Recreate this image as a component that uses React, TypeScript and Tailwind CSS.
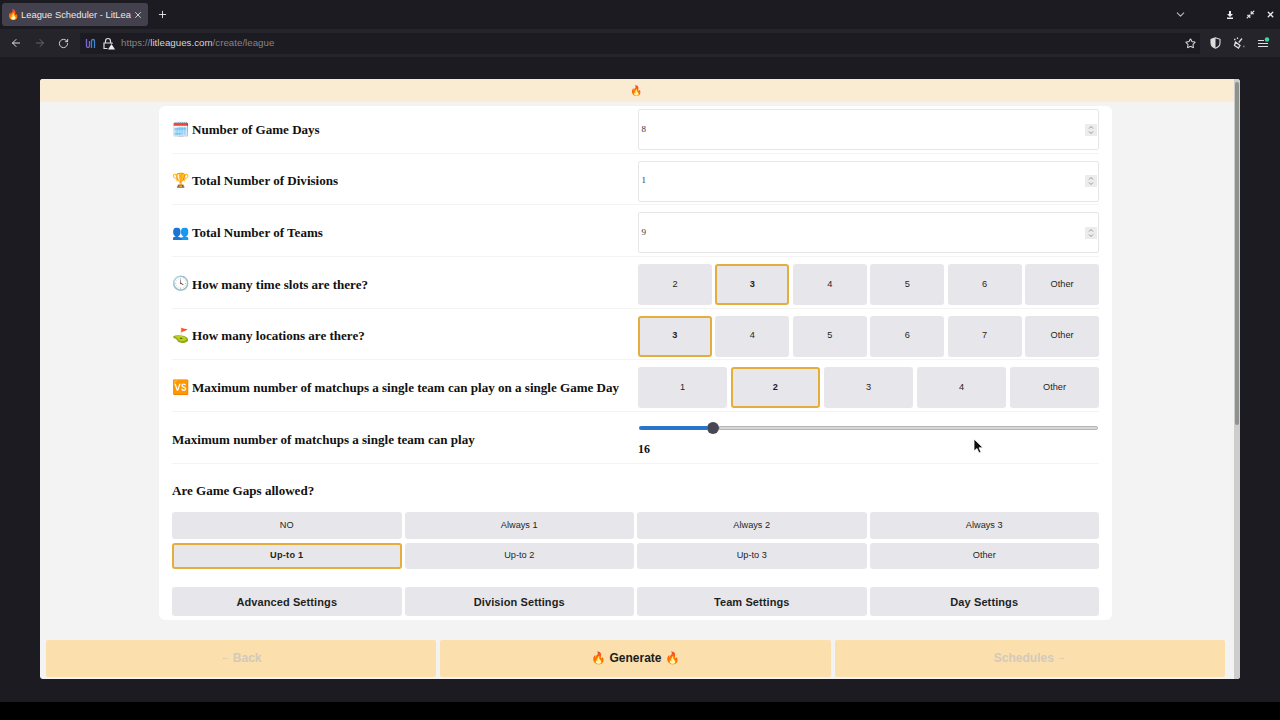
import { ArrowLeft, ArrowRight, RotateCw, Plus, X, ChevronDown, Star, Minimize2 } from 'lucide-react';

const sans = "font-['Liberation_Sans',sans-serif]";

function Choice({ label, active, big }: { label: string; active?: boolean; big?: boolean }) {
  return (
    <div
      className={`flex min-w-0 flex-1 basis-0 items-center justify-center rounded-[3px] border-2 bg-[#e7e7eb] text-[#1f1f23] ${
        big ? 'text-[11px] font-bold tracking-[0.1px]' : 'text-[9.2px]'
      } ${active ? 'border-[#e5ad3c] font-bold tracking-[0.25px]' : 'border-transparent'}`}
    >
      {label}
    </div>
  );
}

function ChoiceRow({ items, active }: { items: string[]; active: string }) {
  return (
    <div className={`flex h-[41px] w-[461px] ${items.length > 5 ? 'gap-[3.5px]' : 'gap-[4px]'}`}>
      {items.map((item) => (
        <Choice key={item} label={item} active={item === active} />
      ))}
    </div>
  );
}

function NumberBox({ value }: { value: string }) {
  return (
    <div className="flex h-[41px] w-[461px] items-center justify-between rounded-[2px] border-[1.5px] border-[#e6e6e6] bg-white pl-[2.5px] pr-[1.5px] text-[9px] text-[#333]">
      <span>{value}</span>
      <svg width="12" height="12" viewBox="0 0 12 12" className="bg-[#ececec]">
        <path d="M4 4.5 6 2.5 8 4.5M4 7.5 6 9.5 8 7.5" fill="none" stroke="#8a8a8a" strokeWidth="0.9" />
      </svg>
    </div>
  );
}

function Row({ icon, label, first, children }: { icon?: string; label: string; first?: boolean; children: React.ReactNode }) {
  return (
    <div className={`flex border-b border-[#f4f4f4] ${first ? 'h-[47.6px] pt-[3px]' : 'h-[51.7px] pt-[7px]'}`}>
      <div className="flex h-[41px] w-[466px] items-center gap-[5px] text-[13.05px] font-bold text-[#111]">
        {icon && <span className="w-[15px] text-[14px] leading-none">{icon}</span>}
        <span>{label}</span>
      </div>
      {children}
    </div>
  );
}

export default function App() {
  return (
    <div className={`flex h-[720px] w-[1280px] flex-col overflow-hidden bg-[#1c1b22] ${sans}`}>
      {/* tab strip */}
      <div className="flex h-[29px] items-center pl-[2px] text-[#e8e8ea]">
        <div className="flex h-[23px] w-[146px] items-center gap-[2px] rounded-[3px] bg-[#42414d] px-[5px] text-[9.4px]">
          <span className="text-[10px] leading-none">🔥</span>
          <span className="flex-1 overflow-hidden whitespace-nowrap pt-[1px]">League Scheduler - LitLeagues</span>
          <X size={10} />
        </div>
        <Plus size={11} className="ml-[9px]" />
        <ChevronDown size={13} className="ml-[1006px] text-[#bbb]" />
        <svg width="8" height="8" viewBox="0 0 8 8" className="ml-[39px]"><path d="M3 0h2v3h2L4 6 1 3h2zM1 6.5h6V8H1z" fill="#eee" /></svg>
        <Minimize2 size={9} strokeWidth={3} className="ml-[12px]" />
        <X size={9} strokeWidth={3.5} className="ml-[11px]" />
      </div>
      {/* toolbar */}
      <div className="flex h-[28px] items-center bg-[#25242b] text-[#dcdcde]">
        <ArrowLeft size={12} className="ml-[10px]" />
        <ArrowRight size={12} className="ml-[12px] text-[#66656c]" />
        <RotateCw size={11} className="ml-[12px]" />
        <div className="ml-[11px] flex h-[21px] w-[1120px] items-center bg-[#1c1b22] pl-[5px]">
          <svg width="11" height="11" viewBox="0 0 11 11" fill="none" strokeWidth="1.3">
            <path d="M1.5 1v7a1.5 1.5 0 0 0 3 0V3" stroke="#7a68d8" />
            <path d="M6.5 10V3a1.5 1.5 0 0 1 3 0v7" stroke="#3f86d0" />
          </svg>
          <svg width="13" height="13" viewBox="0 0 13 13" className="ml-[6px]" fill="none" stroke="#ddd" strokeWidth="1.2">
            <path d="M3.5 6V4a2.5 2.5 0 0 1 5 0v2" />
            <path d="M5.5 11.5H2V6h8v1" />
            <path d="M9.5 7 13 12.5H6z" fill="#eee" stroke="none" />
          </svg>
          <div className="ml-[6px] text-[9.75px] text-[#85848b]">
            https://<span className="text-[#d4d4d6]">litleagues.com</span>/create/league
          </div>
          <Star size={11} strokeWidth={2.2} className="ml-auto mr-[4px]" />
        </div>
        <svg width="11" height="12" viewBox="0 0 11 12" className="ml-[10px]">
          <path d="M5.5.8 1 2.3v3.5c0 2.8 2 4.6 4.5 5.4C8 10.4 10 8.6 10 5.8V2.3z" fill="none" stroke="#ddd" strokeWidth="1.1" />
          <path d="M5.5.8 1 2.3v3.5c0 2.8 2 4.6 4.5 5.4z" fill="#ddd" />
        </svg>
        <svg width="13" height="12" viewBox="0 0 13 12" className="ml-[12px]" fill="none" stroke="#ddd" strokeWidth="1.3">
          <path d="M9 1.5 5.8 5.5M2.5 5l4.5 3.5L5.5 11 1.5 8.5zM10.5 9.5h.8M1 2.5h1.5M4.5.5v1.5" />
        </svg>
        <svg width="13" height="12" viewBox="0 0 13 12" className="ml-[11px]" fill="none" stroke="#ddd" strokeWidth="1.2">
          <path d="M1 3.5h6M1 6.5h10M1 9.5h10" />
          <circle cx="10" cy="2.5" r="2.2" fill="#3fd6a0" stroke="none" />
        </svg>
      </div>
      {/* page window */}
      <div className="relative ml-[40px] mt-[22px] flex h-[600px] w-[1200px] overflow-hidden rounded-[3px] bg-[#f3f3f3]">
        <div className="flex w-[1194px] flex-col">
          <div className="flex h-[23px] items-center justify-center bg-[#faebd3] pr-[3px] text-[10px]">🔥</div>
          <div className="ml-[119px] mt-[4px] flex h-[514px] w-[953px] flex-col rounded-[6px] bg-white px-[13px] font-['Liberation_Serif',serif]">
            <Row first icon="🗓️" label="Number of Game Days">
              <NumberBox value="8" />
            </Row>
            <Row icon="🏆" label="Total Number of Divisions">
              <NumberBox value="1" />
            </Row>
            <Row icon="👥" label="Total Number of Teams">
              <NumberBox value="9" />
            </Row>
            <Row icon="🕓" label="How many time slots are there?">
              <div className={sans}>
                <ChoiceRow items={['2', '3', '4', '5', '6', 'Other']} active="3" />
              </div>
            </Row>
            <Row icon="⛳" label="How many locations are there?">
              <div className={sans}>
                <ChoiceRow items={['3', '4', '5', '6', '7', 'Other']} active="3" />
              </div>
            </Row>
            <Row icon="🆚" label="Maximum number of matchups a single team can play on a single Game Day">
              <div className={sans}>
                <ChoiceRow items={['1', '2', '3', '4', 'Other']} active="2" />
              </div>
            </Row>
            <div className="flex h-[51.7px] border-b border-[#f4f4f4]">
              <div className="flex h-[55px] w-[466px] items-center text-[13.05px] font-bold text-[#111]">
                Maximum number of matchups a single team can play
              </div>
              <div className="w-[461px] pt-[10px]">
                <div className="flex h-[12px] items-center">
                  <div className="ml-[1px] h-[4px] w-[68px] rounded-l-full bg-[#2a74cc]" />
                  <div className="h-[12px] w-[12px] rounded-full bg-[#474853]" />
                  <div className="mr-[1px] h-[4px] flex-1 rounded-r-full border border-[#b5b5b5] bg-[#d8d8d8]" />
                </div>
                <div className="mt-[6px] text-[12px] font-bold text-[#111]">16</div>
              </div>
            </div>
            <div className="mt-[17px] text-[13.05px] font-bold text-[#111]">Are Game Gaps allowed?</div>
            <div className={`mt-[12px] grid h-[57px] grid-cols-4 grid-rows-2 gap-x-[3px] gap-y-[4px] ${sans}`}>
              {['NO', 'Always 1', 'Always 2', 'Always 3', 'Up-to 1', 'Up-to 2', 'Up-to 3', 'Other'].map((item) => (
                <Choice key={item} label={item} active={item === 'Up-to 1'} />
              ))}
            </div>
            <div className={`mt-[18px] grid h-[29px] grid-cols-4 gap-x-[3px] ${sans}`}>
              {['Advanced Settings', 'Division Settings', 'Team Settings', 'Day Settings'].map((item) => (
                <Choice key={item} label={item} big />
              ))}
            </div>
          </div>
          <div className="ml-[6px] mt-[20px] flex h-[37px] w-[1179px] gap-[4px] text-[12px] font-bold">
            <div className="flex flex-1 basis-0 items-center justify-center gap-[3px] rounded-[2px] bg-[#fbdfac] pb-[2px] text-[#d2cabb]">
              <span className="text-[9px]">←</span> Back
            </div>
            <div className="flex flex-1 basis-0 items-center justify-center rounded-[2px] bg-[#fbdfac] pb-[1px] text-[#1c1c1c]">🔥 Generate 🔥</div>
            <div className="flex flex-1 basis-0 items-center justify-center gap-[3px] rounded-[2px] bg-[#fbdfac] pb-[2px] text-[#d2cabb]">
              Schedules <span className="text-[9px]">→</span>
            </div>
          </div>
        </div>
        {/* scrollbar */}
        <div className="w-[6px] bg-[#cdcdcd] px-[1px] pt-[3px]">
          <div className="h-[343px] rounded-full bg-[#8e928c]" />
        </div>
        {/* mouse pointer */}
        <svg width="11" height="15" viewBox="0 0 11 15" className="absolute left-[933px] top-[360px]">
          <path d="M1 0v12l3-2.5 2 4.5 2-1-2-4.2h4z" fill="#111" stroke="#fff" strokeWidth="0.8" />
        </svg>
      </div>
      <div className="mt-[23px] h-[18px] bg-black" />
    </div>
  );
}
